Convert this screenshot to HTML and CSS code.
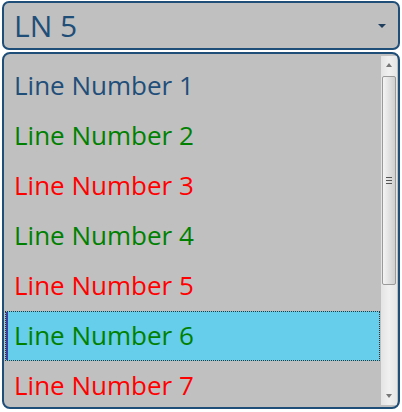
FILE: index.html
```html
<!DOCTYPE html>
<html lang="en">
<head>
    <meta charset="UTF-8">
    <meta name="viewport" content="width=device-width, initial-scale=1.0">
    <title>Line Numbers</title>
    <link rel="stylesheet" href="styles.css">
</head>
<body>
    <div class="combo">
        <span class="combo-text">LN 5</span>
        <span class="combo-arrow"></span>
    </div>

    <div class="dropdown">
        <ul class="list">
            <li class="item blue">Line Number 1</li>
            <li class="item green">Line Number 2</li>
            <li class="item red">Line Number 3</li>
            <li class="item green">Line Number 4</li>
            <li class="item red">Line Number 5</li>
            <li class="item green selected">Line Number 6</li>
            <li class="item red">Line Number 7</li>
        </ul>
        <div class="scrollbar">
            <span class="arrow up"></span>
            <div class="track">
                <div class="thumb">
                    <span class="grip"></span>
                </div>
            </div>
            <span class="arrow down"></span>
        </div>
    </div>
</body>
</html>
```

FILE: styles.css
```css
body {
    margin: 0;
    padding: 1px 2px 0 2px;
    background-color: #fff;
    font-family: "Open Sans", "Noto Sans", sans-serif;
}

.combo {
    height: 45px;
    border: 2px solid #1f4e79;
    border-radius: 7px;
    background-color: #c0c0c0;
    display: flex;
    align-items: center;
    justify-content: space-between;
    padding: 0 12px 0 10px;
}

.combo-text {
    font-size: 30px;
    color: #1f4e79;
    line-height: 1;
    padding-top: 1px;
}

.combo-arrow {
    width: 0;
    height: 0;
    border-left: 4px solid transparent;
    border-right: 4px solid transparent;
    border-top: 4px solid #1f3d5c;
}

.dropdown {
    margin-top: 2px;
    height: 353px;
    border: 2px solid #1f4e79;
    border-radius: 8px;
    background-color: #c0c0c0;
    display: flex;
    overflow: hidden;
}

.list {
    list-style: none;
    margin: 0;
    padding: 7px 0 0 1px;
    flex: 1;
    overflow: hidden;
}

.item {
    height: 48px;
    border: 1px solid transparent;
    padding-left: 8px;
    font-size: 26px;
    line-height: 46px;
}

.blue {
    color: #1f4e79;
}

.green {
    color: #008000;
}

.red {
    color: #ff0000;
}

.selected {
    background-color: #66cdea;
    border: 1px dotted #333;
    box-shadow: inset 2px 0 0 #4040a0;
}

.scrollbar {
    width: 16px;
    margin: 2px 1px 2px 1px;
    background: linear-gradient(to right, #e4e4e4, #f0f0f0 50%, #e6e6e6);
    display: flex;
    flex-direction: column;
    align-items: center;
}

.arrow {
    width: 0;
    height: 0;
    border-left: 3px solid transparent;
    border-right: 3px solid transparent;
    margin: 7px 0;
}

.arrow.up {
    border-bottom: 4px solid #777;
}

.arrow.down {
    border-top: 4px solid #777;
}

.track {
    flex: 1;
    width: 100%;
    display: flex;
    flex-direction: column;
}

.thumb {
    height: 207px;
    margin: 2px 1px 0 1px;
    border: 1px solid #9a9a9a;
    border-radius: 2px;
    background: linear-gradient(to right, #f4f4f4, #dedede 60%, #cfcfcf);
    display: flex;
    align-items: center;
    justify-content: center;
}

.grip {
    width: 6px;
    height: 5px;
    border-top: 1px solid #555;
    border-bottom: 1px solid #555;
    position: relative;
}

.grip::after {
    content: "";
    position: absolute;
    left: 0;
    right: 0;
    top: 2px;
    border-top: 1px solid #555;
}
```
